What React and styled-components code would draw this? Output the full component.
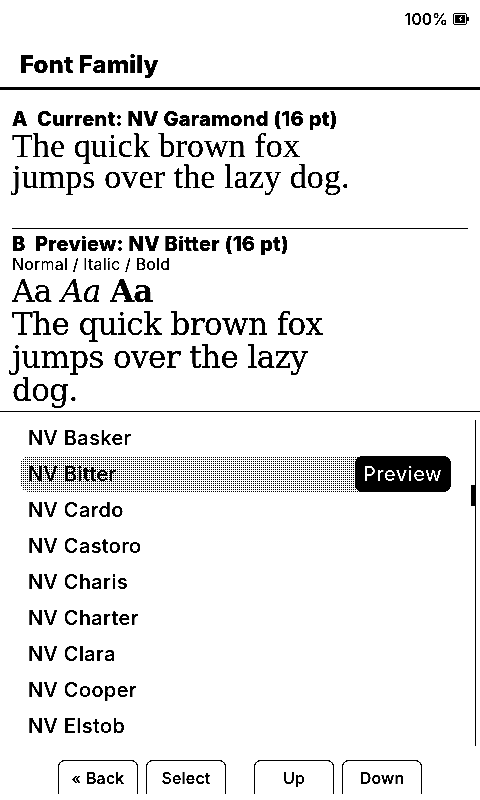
import React from "react";
import styled, { createGlobalStyle } from "styled-components";

const Global = createGlobalStyle`
  html, body { margin: 0; padding: 0; background: #fff; }
  body { font-family: Inter, "Liberation Sans", sans-serif; color: #000; }
`;

const Page = styled.div`
  width: 480px;
  height: 800px;
  overflow: hidden;
  background: #fff;
  display: flex;
  flex-direction: column;
  filter: brightness(0.78) contrast(9);
`;

const StatusBar = styled.div`
  height: 38px;
  display: flex;
  align-items: center;
  justify-content: flex-end;
  gap: 5px;
  padding-right: 11px;
  font-size: 16px;
  font-weight: 500;
`;

const Header = styled.h1`
  margin: 0;
  height: 52px;
  box-sizing: border-box;
  padding: 10px 0 0 20px;
  border-bottom: 3px solid #000;
  font-size: 24px;
  line-height: 34px;
  font-weight: 800;
  letter-spacing: 0.15px;
`;

const Section = styled.section`
  height: ${(p) => p.$height}px;
  box-sizing: border-box;
  padding: ${(p) => p.$top}px 0 0 12px;
`;

const Label = styled.div`
  font-size: 20px;
  line-height: 22px;
  font-weight: 800;
  letter-spacing: 0.3px;
  white-space: pre;
`;

const Caption = styled.div`
  font-size: 16px;
  line-height: 18px;
  font-weight: 400;
  letter-spacing: 0.2px;
`;

const Garamond = styled.div`
  font-family: "Liberation Serif", serif;
  font-size: 34px;
  line-height: 31px;
  letter-spacing: 0.1px;
`;

const Bitter = styled.div`
  font-family: "DejaVu Serif", serif;
  font-size: 31px;
  line-height: 33px;
  letter-spacing: -0.6px;
  width: 330px;
  padding-top: 2px;
  & em { font-style: italic; }
  & b { font-weight: 700; }
`;

const Rule = styled.hr`
  margin: 0 ${(p) => (p.$inset ? 12 : 0)}px;
  border: 0;
  height: 1px;
  background: #000;
`;

const ListArea = styled.div`
  position: relative;
  height: 333px;
  box-sizing: border-box;
  padding: 8px 29px 0 20px;
`;

const Row = styled.div`
  height: 36px;
  display: flex;
  align-items: center;
  justify-content: space-between;
  padding-left: 8px;
  border-radius: 10px;
  font-size: 20px;
  font-weight: 500;
  letter-spacing: 0.4px;
  ${(p) =>
    p.$selected &&
    `background:
      linear-gradient(90deg, #fff 50%, transparent 50%) 0 0 / 2px 2px,
      linear-gradient(#fff 50%, #000 50%) 0 0 / 2px 2px;`}
`;

const PreviewBadge = styled.span`
  height: 36px;
  box-sizing: border-box;
  padding: 0 9px 0 8px;
  display: flex;
  align-items: center;
  background: #000;
  color: #fff;
  border-radius: 8px;
`;

const ScrollTrack = styled.div`
  position: absolute;
  left: 475px;
  top: 8px;
  width: 1px;
  height: 326px;
  background: #000;
`;

const ScrollThumb = styled.div`
  position: absolute;
  left: 471px;
  top: 73px;
  width: 5px;
  height: 21px;
  background: #000;
`;

const ButtonBar = styled.div`
  margin-top: 15px;
  display: flex;
  padding-left: 58px;
  gap: 8px;
`;

const SoftButton = styled.button`
  width: 80px;
  height: 34px;
  box-sizing: border-box;
  padding: 1px 0 0;
  margin-left: ${(p) => (p.$gap ? 20 : 0)}px;
  border: 1px solid #000;
  border-bottom: 0;
  border-radius: 7px 7px 0 0;
  background: #fff;
  color: #000;
  font: 500 16px Inter, sans-serif;
  letter-spacing: 0.2px;
`;

const fonts = ["NV Basker", "NV Bitter", "NV Cardo", "NV Castoro", "NV Charis", "NV Charter", "NV Clara", "NV Cooper", "NV Elstob"];

function Battery() {
  return (
    <svg width="16" height="12" viewBox="0 0 16 12">
      <rect x="0.5" y="0.5" width="13" height="11" rx="1.5" fill="#fff" stroke="#000" />
      <rect x="2" y="2" width="10" height="8" fill="#000" />
      <path d="M8.5 2.5 5 6.5H7L5.5 9.5 10 5.5H8L9.5 2.5Z" fill="#fff" />
      <rect x="14" y="4" width="1.5" height="4" fill="#000" />
    </svg>
  );
}

export default function App() {
  return (
    <>
      <Global />
      <Page>
        <StatusBar>
          <span>100%</span>
          <Battery />
        </StatusBar>
        <Header>Font Family</Header>
        <Section $height={138} $top={18}>
          <Label>{"A  Current: NV Garamond (16 pt)"}</Label>
          <Garamond>
            The quick brown fox
            <br />
            jumps over the lazy dog.
          </Garamond>
        </Section>
        <Rule $inset />
        <Section $height={182} $top={4}>
          <Label>{"B  Preview: NV Bitter (16 pt)"}</Label>
          <Caption>Normal / Italic / Bold</Caption>
          <Bitter>
            Aa <em>Aa</em> <b>Aa</b>
            <br />
            The quick brown fox jumps over the lazy dog.
          </Bitter>
        </Section>
        <Rule />
        <ListArea>
          {fonts.map((f) => (
            <Row key={f} $selected={f === "NV Bitter"}>
              {f}
              {f === "NV Bitter" && <PreviewBadge>Preview</PreviewBadge>}
            </Row>
          ))}
          <ScrollTrack />
          <ScrollThumb />
        </ListArea>
        <ButtonBar>
          <SoftButton>« Back</SoftButton>
          <SoftButton>Select</SoftButton>
          <SoftButton $gap>Up</SoftButton>
          <SoftButton>Down</SoftButton>
        </ButtonBar>
      </Page>
    </>
  );
}
